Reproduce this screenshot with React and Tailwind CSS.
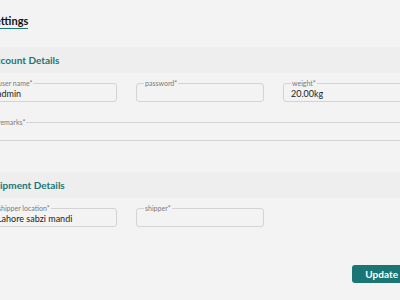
function Field({ label, value, className = '' }) {
  return (
    <fieldset className={`border border-[#d3d3d3] rounded-[3px] px-[7px] ${className}`}>
      <legend className="px-[1px] text-[7px] leading-[8px] text-[#7a7a7a]">{label}</legend>
      <input
        readOnly
        value={value}
        className="block w-full h-[14px] bg-transparent text-[9px] leading-[14px] text-[#222] outline-none"
      />
    </fieldset>
  )
}

function SectionBar({ title }) {
  return (
    <div className="h-[26px] flex items-center bg-[#eeeeee] -mx-[40px] px-[40px]">
      <h2 className="text-[10px] font-bold text-[#1a7675]">{title}</h2>
    </div>
  )
}

export default function App() {
  return (
    <div className="min-h-[300px] bg-[#f3f3f3] overflow-hidden font-['Lato','Noto_Sans',sans-serif]">
      <div className="-ml-[11px] w-[422px]">
        <h1 className="mt-[15px] w-fit text-[11px] font-bold leading-[12px] pb-[1px] border-b border-[#1a7675] text-[#111]">
          Settings
        </h1>

        <div className="mt-[18px]">
          <SectionBar title="Account Details" />
        </div>
        <div className="mt-[6px] grid grid-cols-3 gap-x-[19px]">
          <Field label="user name*" value="admin" />
          <Field label="password*" value="" />
          <Field label="weight*" value="20.00kg" />
        </div>
        <Field label="remarks*" value="" className="mt-[16px]" />

        <div className="mt-[31px]">
          <SectionBar title="Shipment Details" />
        </div>
        <div className="mt-[6px] grid grid-cols-3 gap-x-[19px]">
          <Field label="shipper location*" value="Lahore sabzi mandi" />
          <Field label="shipper*" value="" />
        </div>

        <div className="mt-[38px] flex justify-end">
          <button className="h-[18px] px-[13px] rounded-[3px] bg-[#1a7675] text-white text-[10px] font-bold leading-[18px]">
            Update
          </button>
        </div>
      </div>
    </div>
  )
}
